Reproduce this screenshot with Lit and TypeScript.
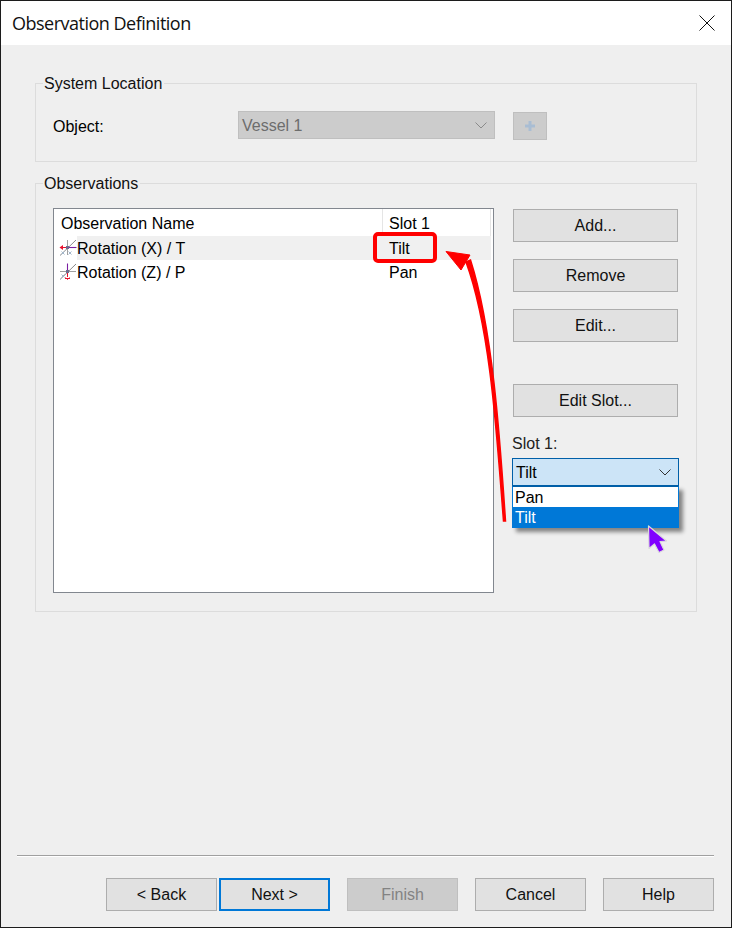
import { LitElement, html, css, svg } from "lit";
import { customElement } from "lit/decorators.js";

const axis = (vertical: boolean) => svg`
  <svg class="axis" width="18" height="18" viewBox="0 0 18 18" fill="none">
    <path d="M1 16.500 L17 1" stroke="#8c8c8c"/>
    ${vertical
      ? svg`<path d="M1 8.500H17" stroke="#a0a0a0"/>
            <path d="M8.500 .5V8" stroke="#7b1fa2" stroke-width="1.100"/>
            <path d="M8.500 8V14" stroke="#e8112d"/>
            <path d="M6 15.500H11" stroke="#e8112d"/>
            <path d="M6.500 14.500L8.500 16.500L10.500 14.500" stroke="#e8112d"/>
            <path d="M2.500 11.500l3 3M2.500 14.500l3-3" stroke="#a3b6c9"/>
            <rect x="7" y="7" width="3" height="3" fill="#6e6a8e"/>`
      : svg`<path d="M8.500 1V16" stroke="#a0a0a0"/>
            <path d="M9 8.500H17.500" stroke="#7b1fa2" stroke-width="1.100"/>
            <path d="M4 8.500H8" stroke="#e8112d"/>
            <path d="M.5 8.500L4 6V11Z" fill="#e8112d"/>
            <path d="M2.500 12.500l3 3M2.500 15.500l3-3M9.500 12.500l3 3M9.500 15.500l3-3" stroke="#a3b6c9"/>
            <rect x="7" y="7" width="3" height="3" fill="#6e6a8e"/>`}
  </svg>`;

const chevron = svg`<svg class="chev" width="12" height="7" viewBox="0 0 12 7" fill="none"><path d="M.5 .5L6 6L11.500 .5" stroke="currentColor"/></svg>`;

@customElement("app-root")
export class AppRoot extends LitElement {
  static styles = css`
    :host {
      display: flex;
      flex-direction: column;
      position: relative;
      box-sizing: border-box;
      width: 732px;
      height: 928px;
      border: 1px solid #1c1c1c;
      background: #efefef;
      font: 16px/20px "Liberation Sans", Arial, sans-serif;
      color: #000;
      overflow: hidden;
    }
    .title {
      display: flex;
      align-items: center;
      justify-content: space-between;
      height: 44px;
      background: #fff;
      padding: 0 16px 0 11px;
      font: 18px/24px "Open Sans", sans-serif;
      letter-spacing: -0.5px;
      color: #111;
      flex: none;
    }
    .main {
      flex: 1;
      display: flex;
      flex-direction: column;
      gap: 11px;
      padding: 28px 34px 0;
    }
    fieldset {
      margin: 0;
      min-width: 0;
      border: 1px solid #dcdcdc;
      padding: 0 17px;
    }
    legend {
      margin-left: -10px;
      padding: 0 2px 0 1px;
      line-height: 22px;
      height: 20px;
      color: #111;
    }
    .loc-row {
      display: grid;
      grid-template-columns: 185px 257px 52px;
      padding: 18px 0 21px;
      align-items: start;
    }
    .obj { padding-top: 6px; }
    .combo-dis {
      display: flex;
      align-items: center;
      justify-content: space-between;
      box-sizing: border-box;
      height: 28px;
      background: #ccc;
      border: 1px solid #bfbfbf;
      color: #6d6d6d;
      padding: 2px 7px 0 3px;
    }
    .combo-dis .chev { color: #8a8a8a; margin-top: -2px; }
    .plus {
      box-sizing: border-box;
      width: 34px;
      height: 28px;
      margin: 1px 0 0 18px;
      background: #ccc;
      border: 1px solid #bfbfbf;
      display: flex;
      align-items: center;
      justify-content: center;
    }
    .obs-row {
      display: flex;
      gap: 19px;
      padding: 15px 0 18px;
    }
    .list {
      box-sizing: border-box;
      width: 441px;
      height: 385px;
      background: #fff;
      border: 1px solid #82878f;
    }
    .row {
      display: grid;
      grid-template-columns: 328px 1fr;
      height: 24px;
      line-height: 26px;
    }
    .head { height: 27px; line-height: 29px; }
    .c1 { display: flex; align-items: flex-start; padding-left: 5px; height: 24px; }
    .head .c1 { padding-left: 7px; height: 27px; }
    .axis { flex: none; margin-top: 3px; }
    .c2 { padding-left: 7px; height: 24px; }
    .head .c2 {
      padding-left: 6px;
      height: 27px;
      border-left: 1px solid #e5e5e5;
      border-right: 1px solid #e5e5e5;
      margin-right: 2px;
    }
    .name { flex: 1; height: 24px; }
    .sel .name, .sel .c2 { background: #f0f0f0; }
    .sel .c2 { margin-right: 2px; }
    .side { width: 165px; padding-top: 1px; display: flex; flex-direction: column; }
    .btn {
      box-sizing: border-box;
      display: flex;
      align-items: center;
      justify-content: center;
      height: 33px;
      background: #e1e1e1;
      border: 1px solid #adadad;
      color: #111;
      padding-top: 1px;
    }
    .gap-s { margin-top: 17px; }
    .gap-l { margin-top: 42px; }
    .slot-label { margin: 17px 0 0 -1px; color: #222; }
    .combo-wrap { position: relative; margin: 4px -1px 0 -1px; }
    .combo {
      display: flex;
      align-items: center;
      justify-content: space-between;
      box-sizing: border-box;
      height: 28px;
      background: #cce4f7;
      border: 1px solid #005fa8;
      padding: 2px 7px 0 3px;
    }
    .combo .chev { color: #333; margin-top: -2px; }
    .drop {
      position: absolute;
      top: 28px;
      left: 0;
      right: 0;
      box-sizing: border-box;
      height: 42px;
      border: 1px solid #0078d7;
      border-top-color: #005fa8;
      background: #fff;
      box-shadow: 4px 4px 4px rgba(0, 0, 0, 0.45);
    }
    .opt { height: 20px; line-height: 22px; padding-left: 2px; }
    .opt.on { background: #0078d7; color: #fff; }
    .foot { flex: none; padding: 0 17px 16px 16px; }
    .sep { height: 1px; background: #a0a0a0; border-bottom: 1px solid #fff; }
    .foot-btns {
      display: flex;
      justify-content: flex-end;
      margin-top: 21px;
    }
    .foot-btns .btn { width: 111px; }
    .next { margin-left: 2px; border: 2px solid #0078d7; }
    .finish { margin-left: 17px; background: #ccc; border-color: #bfbfbf; color: #838383; }
    .cancel, .help { margin-left: 17px; }
    .overlay { position: absolute; left: -1px; top: -1px; pointer-events: none; }
  `;

  render() {
    return html`
      <div class="title">
        <span>Observation Definition</span>
        <svg width="16" height="16" viewBox="0 0 16 16" fill="none"><path d="M.5 .5L15.500 15.500M15.500 .5L.5 15.500" stroke="#111"/></svg>
      </div>
      <div class="main">
        <fieldset>
          <legend>System Location</legend>
          <div class="loc-row">
            <div class="obj">Object:</div>
            <div class="combo-dis"><span>Vessel 1</span>${chevron}</div>
            <div class="plus">
              <svg width="10" height="10" viewBox="0 0 10 10"><path d="M5 0V10M0 5H10" stroke="#a9bdd3" stroke-width="3"/></svg>
            </div>
          </div>
        </fieldset>
        <fieldset>
          <legend>Observations</legend>
          <div class="obs-row">
            <div class="list">
              <div class="row head"><div class="c1">Observation Name</div><div class="c2">Slot 1</div></div>
              <div class="row sel"><div class="c1">${axis(false)}<span class="name">Rotation (X) / T</span></div><div class="c2">Tilt</div></div>
              <div class="row"><div class="c1">${axis(true)}<span class="name">Rotation (Z) / P</span></div><div class="c2">Pan</div></div>
            </div>
            <div class="side">
              <div class="btn">Add...</div>
              <div class="btn gap-s">Remove</div>
              <div class="btn gap-s">Edit...</div>
              <div class="btn gap-l">Edit Slot...</div>
              <div class="slot-label">Slot 1:</div>
              <div class="combo-wrap">
                <div class="combo"><span>Tilt</span>${chevron}</div>
                <div class="drop">
                  <div class="opt">Pan</div>
                  <div class="opt on">Tilt</div>
                </div>
              </div>
            </div>
          </div>
        </fieldset>
      </div>
      <div class="foot">
        <div class="sep"></div>
        <div class="foot-btns">
          <div class="btn">&lt; Back</div>
          <div class="btn next">Next &gt;</div>
          <div class="btn finish">Finish</div>
          <div class="btn cancel">Cancel</div>
          <div class="btn help">Help</div>
        </div>
      </div>
      <svg class="overlay" width="732" height="928" viewBox="0 0 732 928" fill="none">
        <rect x="375" y="234" width="60" height="27" rx="3" stroke="#f00" stroke-width="4"/>
        <path d="M503.500 521 C497 440 491 330 466 262 L470.500 260 C493 330 500 440 505.500 521 Z" fill="#f00" stroke="#f00" stroke-width="1.500"/>
        <path d="M446 251.500 L470 255 L461 270 Z" fill="#f00" stroke="#f00" stroke-linejoin="round"/>
        <path d="M648.500 526 L649 548.500 L654.500 544 L659 552.500 L664 550 L660 541.500 L666.500 541 Z" fill="#8000ff" stroke="#dcdcdc" stroke-width="1.200" stroke-linejoin="round"/>
      </svg>
    `;
  }
}
